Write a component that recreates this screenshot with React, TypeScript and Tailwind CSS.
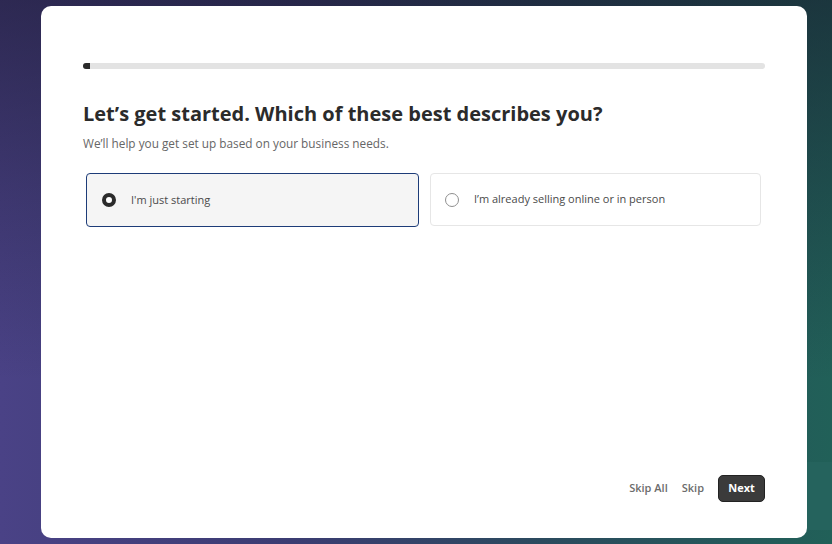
import React from "react";

export default function App() {
  return (
    <div
      className="w-[832px] h-[544px] overflow-hidden flex flex-row bg-[linear-gradient(180deg,rgba(22,20,40,0.55)_0%,rgba(22,20,40,0.25)_35%,rgba(0,0,0,0)_70%),linear-gradient(90deg,#4a4286_0%,#3b3c72_35%,#2b4a5e_65%,#216058_100%)]"
      style={{ fontFamily: "'Open Sans', 'Noto Sans', sans-serif" }}
    >
      <div className="w-[41px] shrink-0" />
      <div className="pt-[6px] shrink-0">
        <div className="w-[766px] h-[532px] bg-white rounded-[10px] flex flex-col pt-[57px] px-[42px] pb-[36px]">
          <div className="h-[6px] w-full rounded-full bg-[#e3e3e3] flex">
            <div className="w-[7px] h-full rounded-l-full bg-[#2b2b2b]" />
          </div>
          <h1 className="mt-[31px] text-[20px] leading-[28px] font-bold text-[#2b2b2b]">
            Let’s get started. Which of these best describes you?
          </h1>
          <p className="mt-[7px] text-[11.8px] leading-[16px] text-[#666666]">
            We’ll help you get set up based on your business needs.
          </p>
          <div className="mt-[22px] ml-[3px] mr-[4px] grid grid-cols-[333px_331px] gap-[11px]">
            <div className="h-[54px] rounded-[4px] border border-[#1d3c78] bg-[#f5f5f5] flex items-center pl-[15px]">
              <span className="w-[14px] h-[14px] rounded-full border-[4px] border-[#2b2b2b] bg-white shrink-0" />
              <span className="ml-[15px] text-[11px] text-[#4a4a4a]">I'm just starting</span>
            </div>
            <div className="h-[53px] rounded-[4px] border border-[#e6e6e6] bg-white flex items-center pl-[14px]">
              <span className="w-[14px] h-[14px] rounded-full border border-[#8f8f8f] bg-white shrink-0" />
              <span className="ml-[15px] text-[11px] text-[#4a4a4a]">I’m already selling online or in person</span>
            </div>
          </div>
          <div className="mt-auto flex flex-row items-center justify-end">
            <button className="text-[11px] font-semibold text-[#6b6b6b]">Skip All</button>
            <button className="ml-[14px] text-[11px] font-semibold text-[#6b6b6b]">Skip</button>
            <button className="ml-[14px] w-[47px] h-[27px] rounded-[5px] bg-[#3b3b3b] border border-[#222222] text-[11px] font-bold text-white">
              Next
            </button>
          </div>
        </div>
      </div>
      <div className="flex-1 flex flex-col">
        <div className="h-[462px]" />
        <div className="h-[68px] bg-[#25635d]" />
      </div>
    </div>
  );
}
